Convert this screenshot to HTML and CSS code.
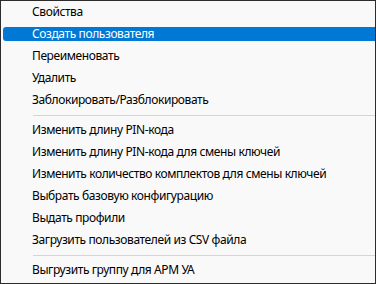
FILE: index.html
```html
<!DOCTYPE html>
<html lang="ru">
<head>
  <meta charset="UTF-8" />
  <title>Меню</title>
  <link rel="stylesheet" href="styles.css">
</head>
<body>
  <div class="menu">
    <div class="item"><span class="label">Свойства</span></div>
    <div class="item active"><span class="label">Создать пользователя</span></div>
    <div class="item"><span class="label">Переименовать</span></div>
    <div class="item"><span class="label">Удалить</span></div>
    <div class="item"><span class="label">Заблокировать/Разблокировать</span></div>
    <div class="sep"></div>
    <div class="item"><span class="label">Изменить длину PIN-кода</span></div>
    <div class="item"><span class="label">Изменить длину PIN-кода для смены ключей</span></div>
    <div class="item"><span class="label">Изменить количество комплектов для смены ключей</span></div>
    <div class="item"><span class="label">Выбрать базовую конфигурацию</span></div>
    <div class="item"><span class="label">Выдать профили</span></div>
    <div class="item"><span class="label">Загрузить пользователей из CSV файла</span></div>
    <div class="sep"></div>
    <div class="item"><span class="label">Выгрузить группу для АРМ УА</span></div>
  </div>
</body>
</html>
```

FILE: styles.css
```css
body {
  margin: 0;
  font-family: "Noto Sans", sans-serif;
  font-size: 12px;
  letter-spacing: -0.4px;
  color: #000;
}
.menu {
  width: 376px;
  height: 284px;
  box-sizing: border-box;
  border: 1px solid #2b2b2b;
  background: #f9f9f9;
  overflow: hidden;
}
.item {
  height: 22px;
  box-sizing: border-box;
  padding: 4px 0 4px 2px;
  white-space: nowrap;
}
.item .label {
  display: block;
  height: 14px;
  line-height: 14px;
  padding-left: 29px;
  border-radius: 3px 0 0 3px;
}
.item.active .label {
  background: #0078d4;
  color: #fff;
}
.sep {
  height: 1px;
  margin: 4px 0 3px 32px;
  background: #d5d5d5;
}
```
